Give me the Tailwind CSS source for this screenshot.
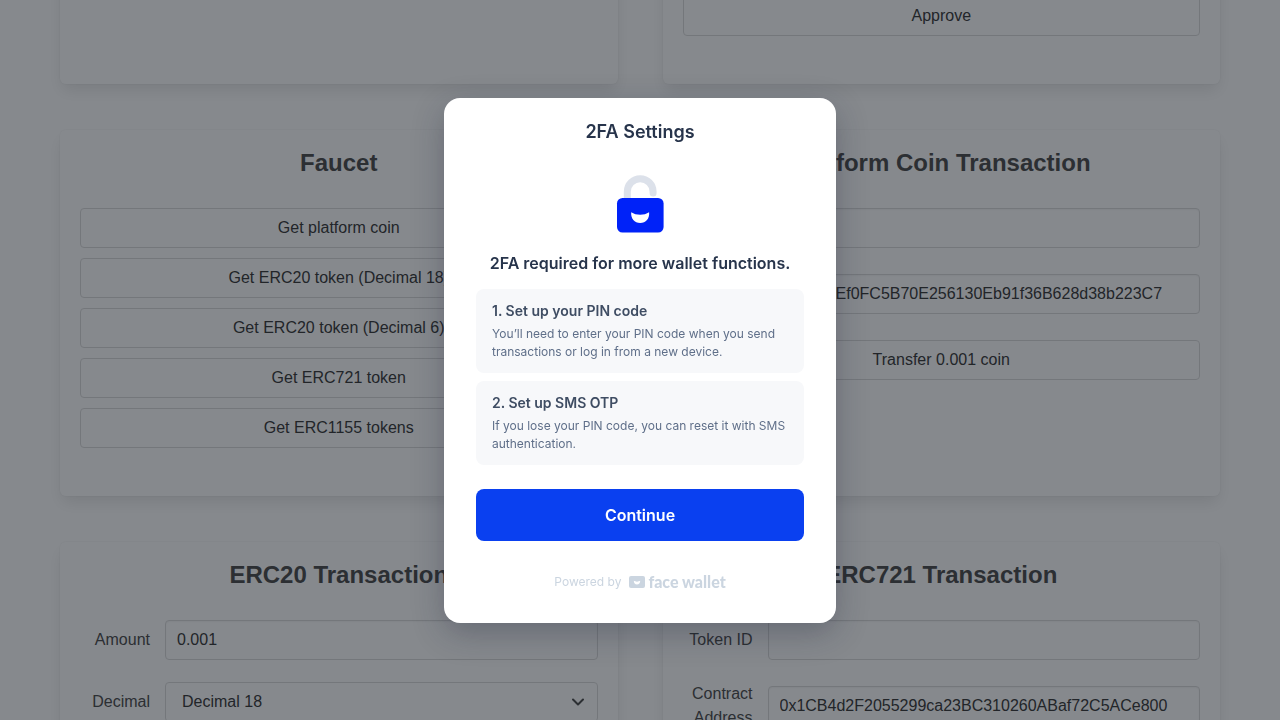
<!DOCTYPE html>
<html lang="en">
<head>
<meta charset="utf-8">
<title>2FA Settings</title>
<script src="https://cdn.jsdelivr.net/npm/@tailwindcss/browser@4"></script>
</head>
<body class="h-screen overflow-hidden bg-white font-['Liberation_Sans',sans-serif] text-base text-[#4a4a4a]">
<main class="-mt-6 grid grid-cols-2 gap-x-[45px] gap-y-[46px] px-[60px]">
  <section class="rounded-md bg-white p-5 shadow-[0_8px_16px_-2px_rgba(10,10,10,0.1),0_0_0_1px_rgba(10,10,10,0.02)]"></section>

  <section class="rounded-md bg-white p-5 pb-12 shadow-[0_8px_16px_-2px_rgba(10,10,10,0.1),0_0_0_1px_rgba(10,10,10,0.02)]">
    <button class="block h-10 w-full rounded border border-[#dbdbdb] bg-white text-[#363636]">Approve</button>
  </section>

  <section class="rounded-md bg-white p-5 pb-12 shadow-[0_8px_16px_-2px_rgba(10,10,10,0.1),0_0_0_1px_rgba(10,10,10,0.02)]">
    <h2 class="mb-8 text-center text-2xl leading-[26px] font-bold text-[#4a4a4a]">Faucet</h2>
    <div class="flex flex-col gap-[10px]">
      <button class="h-10 rounded border border-[#dbdbdb] bg-white text-[#363636]">Get platform coin</button>
      <button class="h-10 rounded border border-[#dbdbdb] bg-white text-[#363636]">Get ERC20 token (Decimal 18)</button>
      <button class="h-10 rounded border border-[#dbdbdb] bg-white text-[#363636]">Get ERC20 token (Decimal 6)</button>
      <button class="h-10 rounded border border-[#dbdbdb] bg-white text-[#363636]">Get ERC721 token</button>
      <button class="h-10 rounded border border-[#dbdbdb] bg-white text-[#363636]">Get ERC1155 tokens</button>
    </div>
  </section>

  <section class="rounded-md bg-white p-5 pb-12 shadow-[0_8px_16px_-2px_rgba(10,10,10,0.1),0_0_0_1px_rgba(10,10,10,0.02)]">
    <h2 class="mb-8 text-center text-2xl leading-[26px] font-bold text-[#4a4a4a]">Platform Coin Transaction</h2>
    <div class="flex flex-col gap-[22px]">
      <div class="flex items-center gap-[15px]">
        <label for="coin-amount" class="w-[70px] text-right">Amount</label>
        <input id="coin-amount" type="text" class="h-10 min-w-0 flex-1 rounded border border-[#dbdbdb] px-[11px] text-[#363636] shadow-[inset_0_1px_2px_rgba(10,10,10,0.05)]">
      </div>
      <div class="flex items-center gap-[15px]">
        <label for="coin-to" class="w-[70px] text-right leading-6">Receiver Address</label>
        <input id="coin-to" type="text" value="0x7A3BEf0FC5B70E256130Eb91f36B628d38b223C7" class="h-10 min-w-0 flex-1 rounded border border-[#dbdbdb] px-[11px] text-[#363636] shadow-[inset_0_1px_2px_rgba(10,10,10,0.05)]">
      </div>
      <button class="h-10 rounded border border-[#dbdbdb] bg-white text-[#363636]">Transfer 0.001 coin</button>
    </div>
  </section>

  <section class="rounded-md bg-white p-5 pb-12 shadow-[0_8px_16px_-2px_rgba(10,10,10,0.1),0_0_0_1px_rgba(10,10,10,0.02)]">
    <h2 class="mb-8 text-center text-2xl leading-[26px] font-bold text-[#4a4a4a]">ERC20 Transaction</h2>
    <div class="flex flex-col gap-[22px]">
      <div class="flex items-center gap-[15px]">
        <label for="erc20-amount" class="w-[70px] text-right">Amount</label>
        <input id="erc20-amount" type="text" value="0.001" class="h-10 min-w-0 flex-1 rounded border border-[#dbdbdb] px-[11px] text-[#363636] shadow-[inset_0_1px_2px_rgba(10,10,10,0.05)]">
      </div>
      <div class="flex items-center gap-[15px]">
        <label for="erc20-decimal" class="w-[70px] text-right">Decimal</label>
        <div class="relative flex-1">
          <select id="erc20-decimal" class="block h-10 w-full appearance-none rounded border border-[#dbdbdb] bg-white px-4 text-[#363636]">
            <option>Decimal 18</option>
            <option>Decimal 6</option>
          </select>
          <svg class="pointer-events-none absolute top-1/2 right-[13px] h-[14px] w-[14px] -translate-y-1/2" viewBox="0 0 14 14" fill="none" stroke="#4a4a4a" stroke-width="2" stroke-linecap="round" stroke-linejoin="round"><path d="M2 4.500 7 9.500 12 4.500"/></svg>
        </div>
      </div>
    </div>
  </section>

  <section class="rounded-md bg-white p-5 pb-12 shadow-[0_8px_16px_-2px_rgba(10,10,10,0.1),0_0_0_1px_rgba(10,10,10,0.02)]">
    <h2 class="mb-8 text-center text-2xl leading-[26px] font-bold text-[#4a4a4a]">ERC721 Transaction</h2>
    <div class="flex flex-col gap-[22px]">
      <div class="flex items-center gap-[15px]">
        <label for="nft-id" class="w-[70px] text-right">Token ID</label>
        <input id="nft-id" type="text" class="h-10 min-w-0 flex-1 rounded border border-[#dbdbdb] px-[11px] text-[#363636] shadow-[inset_0_1px_2px_rgba(10,10,10,0.05)]">
      </div>
      <div class="flex items-center gap-[15px]">
        <label for="nft-contract" class="w-[70px] text-right leading-6">Contract Address</label>
        <input id="nft-contract" type="text" value="0x1CB4d2F2055299ca23BC310260ABaf72C5ACe800" class="h-10 min-w-0 flex-1 rounded border border-[#dbdbdb] px-[11px] text-[#363636] shadow-[inset_0_1px_2px_rgba(10,10,10,0.05)]">
      </div>
    </div>
  </section>
</main>

<div class="fixed inset-0 flex items-center justify-center bg-[#0d131b]/50 font-['Inter',sans-serif]">
  <div role="dialog" aria-modal="true" aria-labelledby="dialog-title" class="flex w-[392px] flex-col rounded-2xl bg-white px-8 pt-5 pb-[31px] shadow-[0_10px_32px_rgba(26,32,56,0.3)]">
    <h1 id="dialog-title" class="text-center text-lg leading-7 font-semibold text-[#27344b]">2FA Settings</h1>
    <svg class="mx-auto mt-7 h-[60px] w-[60px]" viewBox="0 0 60 60" fill="none">
      <path d="M17.300 27V17.700a12.900 12.900 0 0 1 25.800 0V19" stroke="#dce1ea" stroke-width="7" stroke-linecap="round"/>
      <rect x="7" y="24" width="46.600" height="34.500" rx="5.500" fill="#0022f8"/>
      <path d="M21.200 38.200c2.600 1.700 5.700 2.500 9 2.500s6.300-.8 8.900-2.500c.7 6.300-3.300 10.800-8.900 10.800s-9.600-4.500-9-10.800Z" fill="#fff"/>
    </svg>
    <p class="mt-[17px] text-center text-base leading-6 font-semibold text-[#27344b]">2FA required for more wallet functions.</p>
    <ol class="mt-[14px] flex flex-col gap-2">
      <li class="rounded-lg bg-[#f7f8fa] px-4 py-3">
        <h2 class="text-sm leading-5 font-semibold text-[#3f4d63]">1. Set up your PIN code</h2>
        <p class="mt-1 text-xs leading-[18px] text-[#5f6f89]">You’ll need to enter your PIN code when you send transactions or log in from a new device.</p>
      </li>
      <li class="rounded-lg bg-[#f7f8fa] px-4 py-3">
        <h2 class="text-sm leading-5 font-semibold text-[#3f4d63]">2. Set up SMS OTP</h2>
        <p class="mt-1 text-xs leading-[18px] text-[#5f6f89]">If you lose your PIN code, you can reset it with SMS authentication.</p>
      </li>
    </ol>
    <button class="mt-6 h-[52px] rounded-lg bg-[#0a40f0] text-base font-semibold text-white">Continue</button>
    <div class="mt-[31px] flex h-5 items-center justify-center text-[#cbd5e0]">
      <span class="text-xs">Powered by</span>
      <svg class="ml-2 h-3 w-4" viewBox="0 0 16 12"><path fill="currentColor" fill-rule="evenodd" d="M2 0h12a2 2 0 0 1 2 2v8a2 2 0 0 1-2 2H2a2 2 0 0 1-2-2V2a2 2 0 0 1 2-2Zm2.800 4.800C4.700 7.100 6.100 8.600 8 8.600s3.300-1.500 3.200-3.800C9.300 5.900 6.700 5.900 4.800 4.800Z"/></svg>
      <span class="ml-[3px] font-['Lato',sans-serif] text-base leading-5 font-black">face wallet</span>
    </div>
  </div>
</div>
</body>
</html>
